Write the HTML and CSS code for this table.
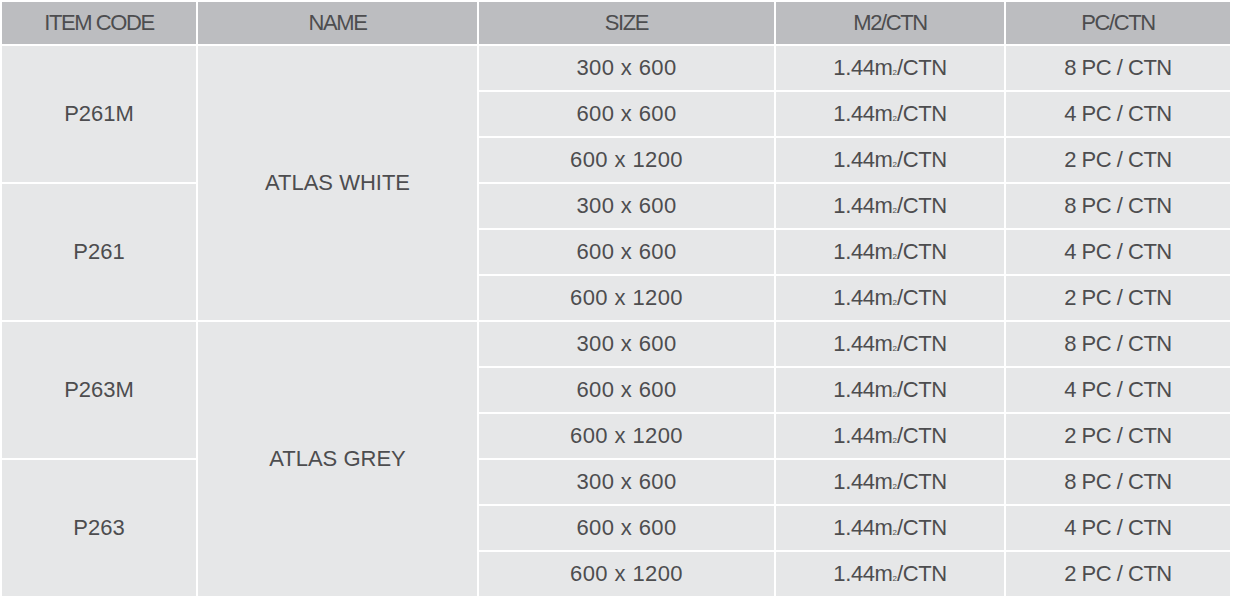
FILE: index.html
```html
<!DOCTYPE html>
<html>
<head>
<meta charset="utf-8">
<link rel="stylesheet" href="styles.css">
</head>
<body>
<table class="spec">
  <colgroup>
    <col class="c1"><col class="c2"><col class="c3"><col class="c4"><col class="c5">
  </colgroup>
  <thead>
    <tr><th>ITEM CODE</th><th>NAME</th><th>SIZE</th><th>M2/CTN</th><th>PC/CTN</th></tr>
  </thead>
  <tbody>
    <tr><td rowspan="3">P261M</td><td rowspan="6">ATLAS WHITE</td><td class="size">300 x 600</td><td class="m2">1.44m<sub>2</sub>/CTN</td><td class="pc">8 PC / CTN</td></tr>
    <tr><td class="size">600 x 600</td><td class="m2">1.44m<sub>2</sub>/CTN</td><td class="pc">4 PC / CTN</td></tr>
    <tr><td class="size">600 x 1200</td><td class="m2">1.44m<sub>2</sub>/CTN</td><td class="pc">2 PC / CTN</td></tr>
    <tr><td rowspan="3">P261</td><td class="size">300 x 600</td><td class="m2">1.44m<sub>2</sub>/CTN</td><td class="pc">8 PC / CTN</td></tr>
    <tr><td class="size">600 x 600</td><td class="m2">1.44m<sub>2</sub>/CTN</td><td class="pc">4 PC / CTN</td></tr>
    <tr><td class="size">600 x 1200</td><td class="m2">1.44m<sub>2</sub>/CTN</td><td class="pc">2 PC / CTN</td></tr>
    <tr><td rowspan="3">P263M</td><td rowspan="6">ATLAS GREY</td><td class="size">300 x 600</td><td class="m2">1.44m<sub>2</sub>/CTN</td><td class="pc">8 PC / CTN</td></tr>
    <tr><td class="size">600 x 600</td><td class="m2">1.44m<sub>2</sub>/CTN</td><td class="pc">4 PC / CTN</td></tr>
    <tr><td class="size">600 x 1200</td><td class="m2">1.44m<sub>2</sub>/CTN</td><td class="pc">2 PC / CTN</td></tr>
    <tr><td rowspan="3">P263</td><td class="size">300 x 600</td><td class="m2">1.44m<sub>2</sub>/CTN</td><td class="pc">8 PC / CTN</td></tr>
    <tr><td class="size">600 x 600</td><td class="m2">1.44m<sub>2</sub>/CTN</td><td class="pc">4 PC / CTN</td></tr>
    <tr><td class="size">600 x 1200</td><td class="m2">1.44m<sub>2</sub>/CTN</td><td class="pc">2 PC / CTN</td></tr>
  </tbody>
</table>
</body>
</html>
```
FILE: styles.css
```css
html, body {
  margin: 0;
  padding: 0;
  background: #ffffff;
}
.spec {
  border-collapse: separate;
  border-spacing: 2px;
  table-layout: fixed;
  width: 1232px;
  font-family: "Liberation Sans", Arial, sans-serif;
  font-size: 22px;
  color: #4d4d4f;
}
.c1 { width: 194px; }
.c2 { width: 279px; }
.c3 { width: 295px; }
.c4 { width: 228px; }
.c5 { width: 224px; }
.spec th {
  background: #bcbdc0;
  height: 42px;
  padding: 0;
  font-weight: normal;
  letter-spacing: -1.4px;
  text-align: center;
  vertical-align: middle;
}
.spec td {
  background: #e6e7e8;
  height: 44px;
  padding: 0;
  text-align: center;
  vertical-align: middle;
}
.spec .size {
  letter-spacing: 0.4px;
}
.spec .m2 {
  letter-spacing: -0.4px;
}
.spec .pc {
  letter-spacing: -0.5px;
}
.spec sub {
  font-size: 8px;
  vertical-align: baseline;
  letter-spacing: 0;
}
```
